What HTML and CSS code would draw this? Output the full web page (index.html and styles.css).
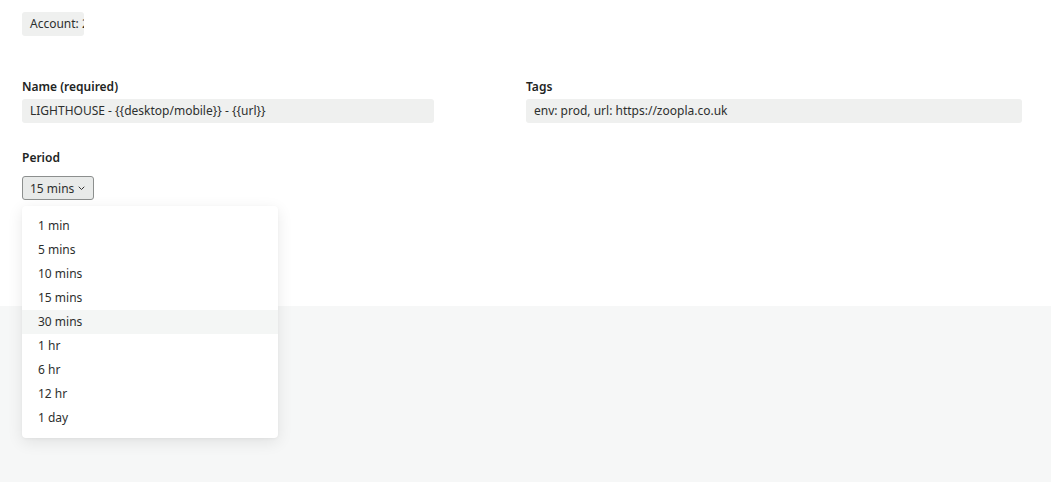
FILE: index.html
```html
<!DOCTYPE html>
<html lang="en">
<head>
<meta charset="utf-8">
<title>Monitor</title>
<link rel="stylesheet" href="styles.css">
</head>
<body>
<div class="top">
  <div class="account">Account: 2048</div>
  <div class="row">
    <div class="field">
      <div class="label">Name (required)</div>
      <div class="input name-input">LIGHTHOUSE - {{desktop/mobile}} - {{url}}</div>
    </div>
    <div class="field">
      <div class="label">Tags</div>
      <div class="input tags-input">env: prod, url: https://zoopla.co.uk</div>
    </div>
  </div>
  <div class="field period">
    <div class="label">Period</div>
    <div class="select-wrap">
      <button class="select">15 mins <svg class="chev" width="7" height="5" viewBox="0 0 7 5"><path d="M1 1l2.5 2.5L6 1" fill="none" stroke="#333" stroke-width="1" stroke-linecap="round" stroke-linejoin="round"/></svg></button>
      <ul class="menu">
        <li>1 min</li>
        <li>5 mins</li>
        <li>10 mins</li>
        <li>15 mins</li>
        <li class="hover">30 mins</li>
        <li>1 hr</li>
        <li>6 hr</li>
        <li>12 hr</li>
        <li>1 day</li>
      </ul>
    </div>
  </div>
</div>
<div class="band"></div>
</body>
</html>
```

FILE: styles.css
```css
html, body {
  margin: 0;
  padding: 0;
  background: #ffffff;
}
body {
  font-family: "Noto Sans", "Open Sans", sans-serif;
  font-size: 12px;
  color: #2d2f2e;
  height: 482px;
  display: flex;
  flex-direction: column;
}
.top {
  padding: 12px 22px 106px;
}
.account {
  width: 54px;
  height: 24px;
  line-height: 24px;
  padding-left: 8px;
  background: #eff0ef;
  border-radius: 3px;
  white-space: nowrap;
  overflow: hidden;
}
.row {
  display: grid;
  grid-template-columns: 412px 496px;
  column-gap: 92px;
  margin-top: 43px;
}
.label {
  font-weight: 600;
  line-height: 16px;
  color: #222423;
  margin-bottom: 4px;
}
.input {
  height: 24px;
  line-height: 24px;
  padding: 0 8px;
  background: #eff0ef;
  border-radius: 3px;
  white-space: nowrap;
  overflow: hidden;
}
.period {
  margin-top: 27px;
}
.period .label {
  margin-bottom: 10px;
}
.select-wrap {
  position: relative;
  height: 24px;
}
.select {
  display: flex;
  align-items: center;
  gap: 4px;
  height: 24px;
  width: 72px;
  box-sizing: border-box;
  padding: 0 0 0 7px;
  font-family: inherit;
  font-size: 12px;
  color: #2d2f2e;
  background: #e8eae9;
  border: 1px solid #8c8f8e;
  border-radius: 3px;
}
.chev {
  margin-top: 1px;
}
.menu {
  position: absolute;
  top: 30px;
  left: 0;
  width: 256px;
  margin: 0;
  padding: 8px 0;
  list-style: none;
  background: #ffffff;
  border-radius: 4px;
  box-shadow: 0 4px 16px rgba(0, 0, 0, 0.09), 0 1px 3px rgba(0, 0, 0, 0.04);
  z-index: 2;
}
.menu li {
  height: 24px;
  line-height: 24px;
  padding: 0 16px;
}
.menu li.hover {
  background: #f4f6f5;
}
.band {
  flex: 1;
  background: #f6f7f7;
}
```
